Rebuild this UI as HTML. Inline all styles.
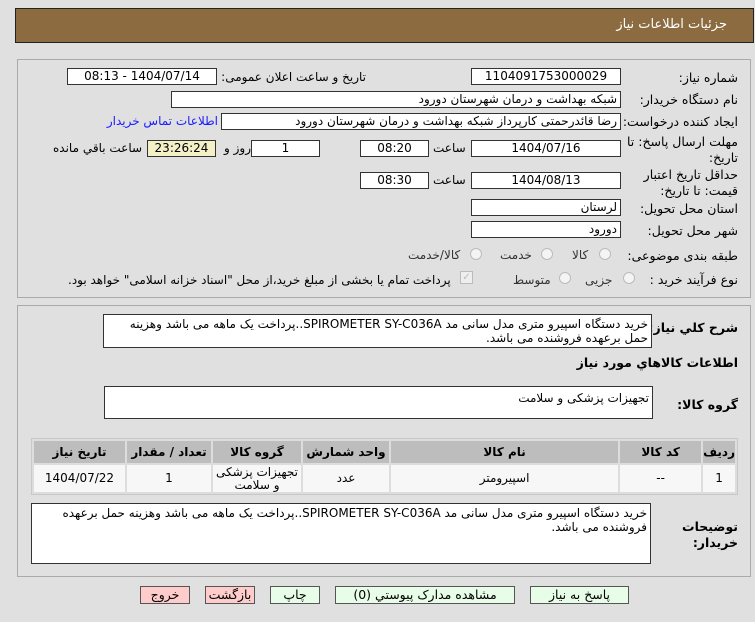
<!DOCTYPE html>
<html><head><meta charset="utf-8"><style>
*{box-sizing:border-box;margin:0;padding:0}
body{width:755px;height:622px;background:#e0e0e0;font-family:"DejaVu Sans","Liberation Sans",sans-serif;font-size:12px;color:#000;position:relative;overflow:hidden;direction:rtl}
.a{position:absolute;white-space:nowrap}
.box{position:absolute;background:#fff;border:1px solid #333;height:17px;line-height:15px;padding:0 3px;text-align:center;font-size:12px}
.l{position:absolute;white-space:nowrap;right:17px;font-size:12.5px}
.btn{position:absolute;top:586px;height:18px;border:1px solid #555;background:#e8fde8;text-align:center;line-height:16px;font-size:12.5px}
table{border-collapse:separate;border-spacing:2px;position:absolute;left:31px;top:438px;width:707px;background:#ddd;border:1px solid #c8c8c8}
th{background:#bdbdbd;height:22px;font-size:12px}
td{background:#f7f7f7;height:27px;text-align:center;font-size:12px;line-height:13px}
.ta{position:absolute;background:#fff;border:1px solid #333;text-align:right;padding:2px 3px;font-size:12px;line-height:14px;white-space:normal}
</style></head><body>
<div class="a" style="left:15px;top:8px;width:739px;height:35px;background:#8b6b3f;border:1px solid #222"></div>
<div class="a" style="right:28px;top:17px;color:#fff;font-size:13px">جزئیات اطلاعات نیاز</div>

<div class="a" style="left:17px;top:59px;width:734px;height:239px;border:1px solid #aaa"></div>
<div class="a" style="left:17px;top:305px;width:734px;height:272px;border:1px solid #aaa"></div>

<div class="l" style="top:70px">شماره نیاز:</div>
<div class="box" style="left:471px;top:68px;width:150px">1104091753000029</div>
<div class="a" style="right:389px;top:70px">تاریخ و ساعت اعلان عمومی:</div>
<div class="box" style="left:67px;top:68px;width:150px">1404/07/14 - 08:13</div>

<div class="l" style="top:92px">نام دستگاه خریدار:</div>
<div class="box" style="left:171px;top:91px;width:450px;text-align:right">شبکه بهداشت و درمان شهرستان دورود</div>

<div class="l" style="top:114px">ایجاد کننده درخواست:</div>
<div class="box" style="left:221px;top:113px;width:400px;text-align:right">رضا قائدرحمتی کارپرداز شبکه بهداشت و درمان شهرستان دورود</div>
<div class="a" style="right:537px;top:114px;color:#1a1aff">اطلاعات تماس خریدار</div>

<div class="l" style="top:134px;line-height:16px;white-space:normal;width:118px">مهلت ارسال پاسخ: تا تاریخ:</div>
<div class="box" style="left:471px;top:140px;width:150px">1404/07/16</div>
<div class="a" style="left:433px;top:141px">ساعت</div>
<div class="box" style="left:360px;top:140px;width:69px">08:20</div>
<div class="box" style="left:251px;top:140px;width:69px">1</div>
<div class="a" style="left:224px;top:141px">روز و</div>
<div class="box" style="left:147px;top:140px;width:69px;background:#f3f0c8">23:26:24</div>
<div class="a" style="left:53px;top:141px">ساعت باقي مانده</div>

<div class="l" style="top:167px;line-height:16px;white-space:normal;width:118px">حداقل تاریخ اعتبار قیمت: تا تاریخ:</div>
<div class="box" style="left:471px;top:172px;width:150px">1404/08/13</div>
<div class="a" style="left:433px;top:173px">ساعت</div>
<div class="box" style="left:360px;top:172px;width:69px">08:30</div>

<div class="l" style="top:201px">استان محل تحویل:</div>
<div class="box" style="left:471px;top:199px;width:150px;text-align:right">لرستان</div>
<div class="l" style="top:223px">شهر محل تحویل:</div>
<div class="box" style="left:471px;top:221px;width:150px;text-align:right">دورود</div>

<div class="l" style="top:248px">طبقه بندی موضوعی:</div>
<div class="a" style="left:599px;top:248px;width:12px;height:12px;border:1px solid #bbb;border-radius:50%;background:#f4f4f4"></div>
<div class="a" style="left:572px;top:248px;color:#333">کالا</div>
<div class="a" style="left:541px;top:248px;width:12px;height:12px;border:1px solid #bbb;border-radius:50%;background:#f4f4f4"></div>
<div class="a" style="left:500px;top:248px;color:#333">خدمت</div>
<div class="a" style="left:470px;top:248px;width:12px;height:12px;border:1px solid #bbb;border-radius:50%;background:#f4f4f4"></div>
<div class="a" style="left:408px;top:248px;color:#333">کالا/خدمت</div>

<div class="l" style="top:272px">نوع فرآیند خرید :</div>
<div class="a" style="left:623px;top:272px;width:12px;height:12px;border:1px solid #bbb;border-radius:50%;background:#f4f4f4"></div>
<div class="a" style="left:585px;top:273px;color:#333">جزیی</div>
<div class="a" style="left:559px;top:272px;width:12px;height:12px;border:1px solid #bbb;border-radius:50%;background:#f4f4f4"></div>
<div class="a" style="left:513px;top:273px;color:#333">متوسط</div>
<div class="a" style="left:460px;top:271px;width:13px;height:13px;border:1px solid #bbb;background:#eee;color:#bbb;font-size:10px;line-height:12px;text-align:center">✓</div>
<div class="a" style="left:68px;top:273px">پرداخت تمام یا بخشی از مبلغ خرید،از محل "اسناد خزانه اسلامی" خواهد بود.</div>

<div class="l" style="top:320px;font-weight:bold">شرح کلي نیاز:</div>
<div class="ta" style="left:103px;top:314px;width:549px;height:34px">خرید دستگاه اسپیرو متری مدل سانی مد SPIROMETER SY-C036A..پرداخت یک ماهه می باشد وهزینه حمل برعهده فروشنده می باشد.</div>
<div class="l" style="top:355px;font-weight:bold">اطلاعات کالاهاي مورد نیاز</div>
<div class="l" style="top:397px;font-weight:bold">گروه کالا:</div>
<div class="ta" style="left:104px;top:386px;width:549px;height:33px;padding-top:4px">تجهیزات پزشکی و سلامت</div>

<table><tr><th style="width:27px">ردیف</th><th style="width:81px">کد کالا</th><th>نام کالا</th><th style="width:86px">واحد شمارش</th><th style="width:88px">گروه کالا</th><th style="width:84px">تعداد / مقدار</th><th style="width:91px">تاریخ نیاز</th></tr>
<tr><td>1</td><td>--</td><td>اسپیرومتر</td><td>عدد</td><td>تجهیزات پزشکی و سلامت</td><td>1</td><td>1404/07/22</td></tr></table>
<div class="l" style="top:519px;font-weight:bold;line-height:16px;white-space:normal;width:60px">توضیحات خریدار:</div>
<div class="ta" style="left:31px;top:503px;width:620px;height:61px">خرید دستگاه اسپیرو متری مدل سانی مد SPIROMETER SY-C036A..پرداخت یک ماهه می باشد وهزینه حمل برعهده فروشنده می باشد.</div>

<div class="btn" style="left:140px;width:50px;background:#fcc">خروج</div>
<div class="btn" style="left:205px;width:50px;background:#fcc">بازگشت</div>
<div class="btn" style="left:270px;width:50px">چاپ</div>
<div class="btn" style="left:335px;width:180px">مشاهده مدارک پیوستي (0)</div>
<div class="btn" style="left:530px;width:99px">پاسخ به نیاز</div>
</body></html>
